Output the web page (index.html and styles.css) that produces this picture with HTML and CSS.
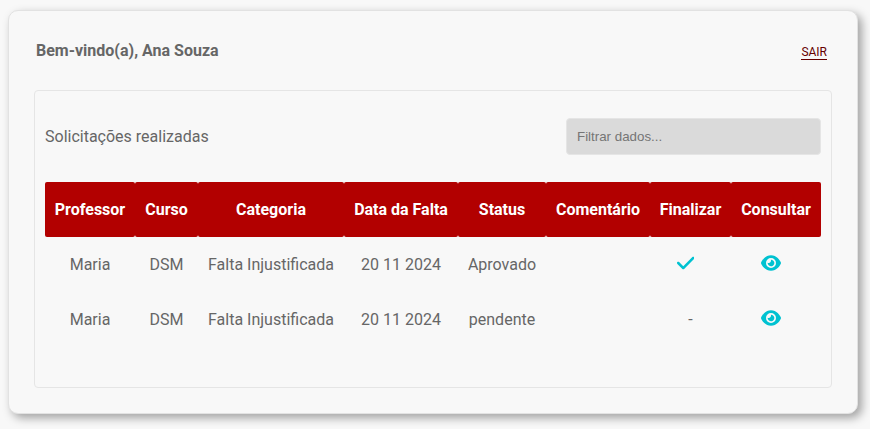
FILE: index.html
```
<!DOCTYPE html>
<html lang="pt-BR">
<head>
<meta charset="utf-8">
<title>Solicitações</title>
<link rel="stylesheet" href="styles.css">
</head>
<body>
<main class="card">
  <header class="top">
    <h1 class="welcome">Bem-vindo(a), Ana Souza</h1>
    <a class="logout" href="#">SAIR</a>
  </header>
  <section class="panel">
    <div class="toolbar">
      <p class="title">Solicitações realizadas</p>
      <input class="filter" type="text" placeholder="Filtrar dados...">
    </div>
    <table class="requests">
      <colgroup><col class="c1"><col class="c2"><col class="c3"><col class="c4"><col class="c5"><col class="c6"><col class="c7"><col class="c8"></colgroup>
      <thead>
        <tr><th>Professor</th><th>Curso</th><th>Categoria</th><th>Data da Falta</th><th>Status</th><th>Comentário</th><th>Finalizar</th><th>Consultar</th></tr>
      </thead>
      <tbody>
        <tr><td>Maria</td><td>DSM</td><td>Falta Injustificada</td><td>20 11 2024</td><td>Aprovado</td><td></td>
          <td><svg class="icon check" viewBox="0 0 448 512"><path d="M438.600 105.400c12.500 12.500 12.500 32.800 0 45.300l-256 256c-12.500 12.500-32.800 12.500-45.300 0l-128-128c-12.500-12.500-12.500-32.800 0-45.300s32.800-12.500 45.300 0L160 338.700 393.400 105.400c12.500-12.500 32.800-12.500 45.300 0z"/></svg></td>
          <td><svg class="icon eye" viewBox="0 0 576 512"><path d="M288 32c-80.800 0-145.500 36.800-192.600 80.600C48.600 156 17.300 208 2.500 243.700c-3.300 7.900-3.300 16.700 0 24.600C17.300 304 48.600 356 95.400 399.400C142.500 443.200 207.200 480 288 480s145.500-36.800 192.600-80.600c46.800-43.500 78.100-95.400 93-131.100c3.300-7.900 3.300-16.700 0-24.600c-14.900-35.700-46.200-87.700-93-131.100C433.500 68.800 368.800 32 288 32zM144 256a144 144 0 1 1 288 0 144 144 0 1 1-288 0zm144-64c0 35.300-28.700 64-64 64c-7.100 0-13.900-1.200-20.300-3.300c-5.500-1.800-11.900 1.600-11.700 7.400c.3 6.900 1.300 13.800 3.200 20.700c13.700 51.200 66.400 81.600 117.600 67.900s81.600-66.400 67.900-117.600c-11.100-41.500-47.800-69.400-88.600-71.100c-5.800-.2-9.200 6.100-7.400 11.700c2.100 6.400 3.300 13.200 3.300 20.300z"/></svg></td></tr>
        <tr><td>Maria</td><td>DSM</td><td>Falta Injustificada</td><td>20 11 2024</td><td>pendente</td><td></td><td>-</td>
          <td><svg class="icon eye" viewBox="0 0 576 512"><path d="M288 32c-80.800 0-145.500 36.800-192.600 80.600C48.600 156 17.300 208 2.500 243.700c-3.300 7.900-3.300 16.700 0 24.600C17.300 304 48.600 356 95.400 399.400C142.500 443.200 207.200 480 288 480s145.500-36.800 192.600-80.600c46.800-43.500 78.100-95.400 93-131.100c3.300-7.900 3.300-16.700 0-24.600c-14.900-35.700-46.200-87.700-93-131.100C433.500 68.800 368.800 32 288 32zM144 256a144 144 0 1 1 288 0 144 144 0 1 1-288 0zm144-64c0 35.300-28.700 64-64 64c-7.100 0-13.900-1.200-20.300-3.300c-5.500-1.800-11.900 1.600-11.700 7.400c.3 6.900 1.300 13.800 3.200 20.700c13.700 51.200 66.400 81.600 117.600 67.900s81.600-66.400 67.900-117.600c-11.100-41.500-47.800-69.400-88.600-71.100c-5.800-.2-9.200 6.100-7.400 11.700c2.100 6.400 3.300 13.200 3.300 20.300z"/></svg></td></tr>
      </tbody>
    </table>
  </section>
</main>
</body>
</html>
```
FILE: styles.css
```
* { box-sizing: border-box; margin: 0; padding: 0; }
body {
  background: #f8f8f8;
  color: #666;
  font: 16px/19px Roboto, sans-serif;
  padding: 10px 12px 15px 8px;
}
.card {
  height: 404px;
  border: 1px solid #e2e2e2;
  border-radius: 10px;
  background: #f8f8f8;
  box-shadow: 4px 4px 10px rgba(0, 0, 0, 0.35);
  padding: 29px 25px 0;
}
.top {
  display: flex;
  justify-content: space-between;
  padding: 1px 5px 0 2px;
  height: 50px;
}
.welcome { font-size: 16px; line-height: 19px; font-weight: 700; }
.logout {
  align-self: flex-start;
  margin-top: 4px;
  font-size: 12px;
  line-height: 14px;
  color: #660000;
  text-decoration: none;
  border-bottom: 1px solid #660000;
}
.panel {
  height: 298px;
  border: 1px solid #e5e5e5;
  border-radius: 4px;
  padding: 27px 10px 0;
}
.toolbar { display: flex; justify-content: space-between; align-items: center; height: 37px; margin-bottom: 27px; }
.title { font-size: 16px; }
.filter {
  width: 255px;
  height: 37px;
  border: 1px solid #e5e5e5;
  border-radius: 4px;
  background: #dadada;
  padding: 0 10px;
  font: 13.333px "Liberation Sans", Arial, sans-serif;
}
.filter::placeholder { color: #757575; }
.requests { width: 776px; border-spacing: 0; table-layout: fixed; text-align: center; }
.requests th { height: 55px; background: #b20000; color: #fff; font-weight: 700; border-radius: 2px; }
.requests td { height: 55px; }
.c1 { width: 90px; } .c2 { width: 63px; } .c3 { width: 146px; } .c4 { width: 114px; }
.c5 { width: 88px; } .c6 { width: 104px; } .c7 { width: 81px; } .c8 { width: 90px; }
.icon { display: inline-block; height: 20px; margin: 0 10px 3px 0; fill: #00c2d1; vertical-align: middle; }
.check { width: 17.5px; }
.eye { width: 20px; }
```
